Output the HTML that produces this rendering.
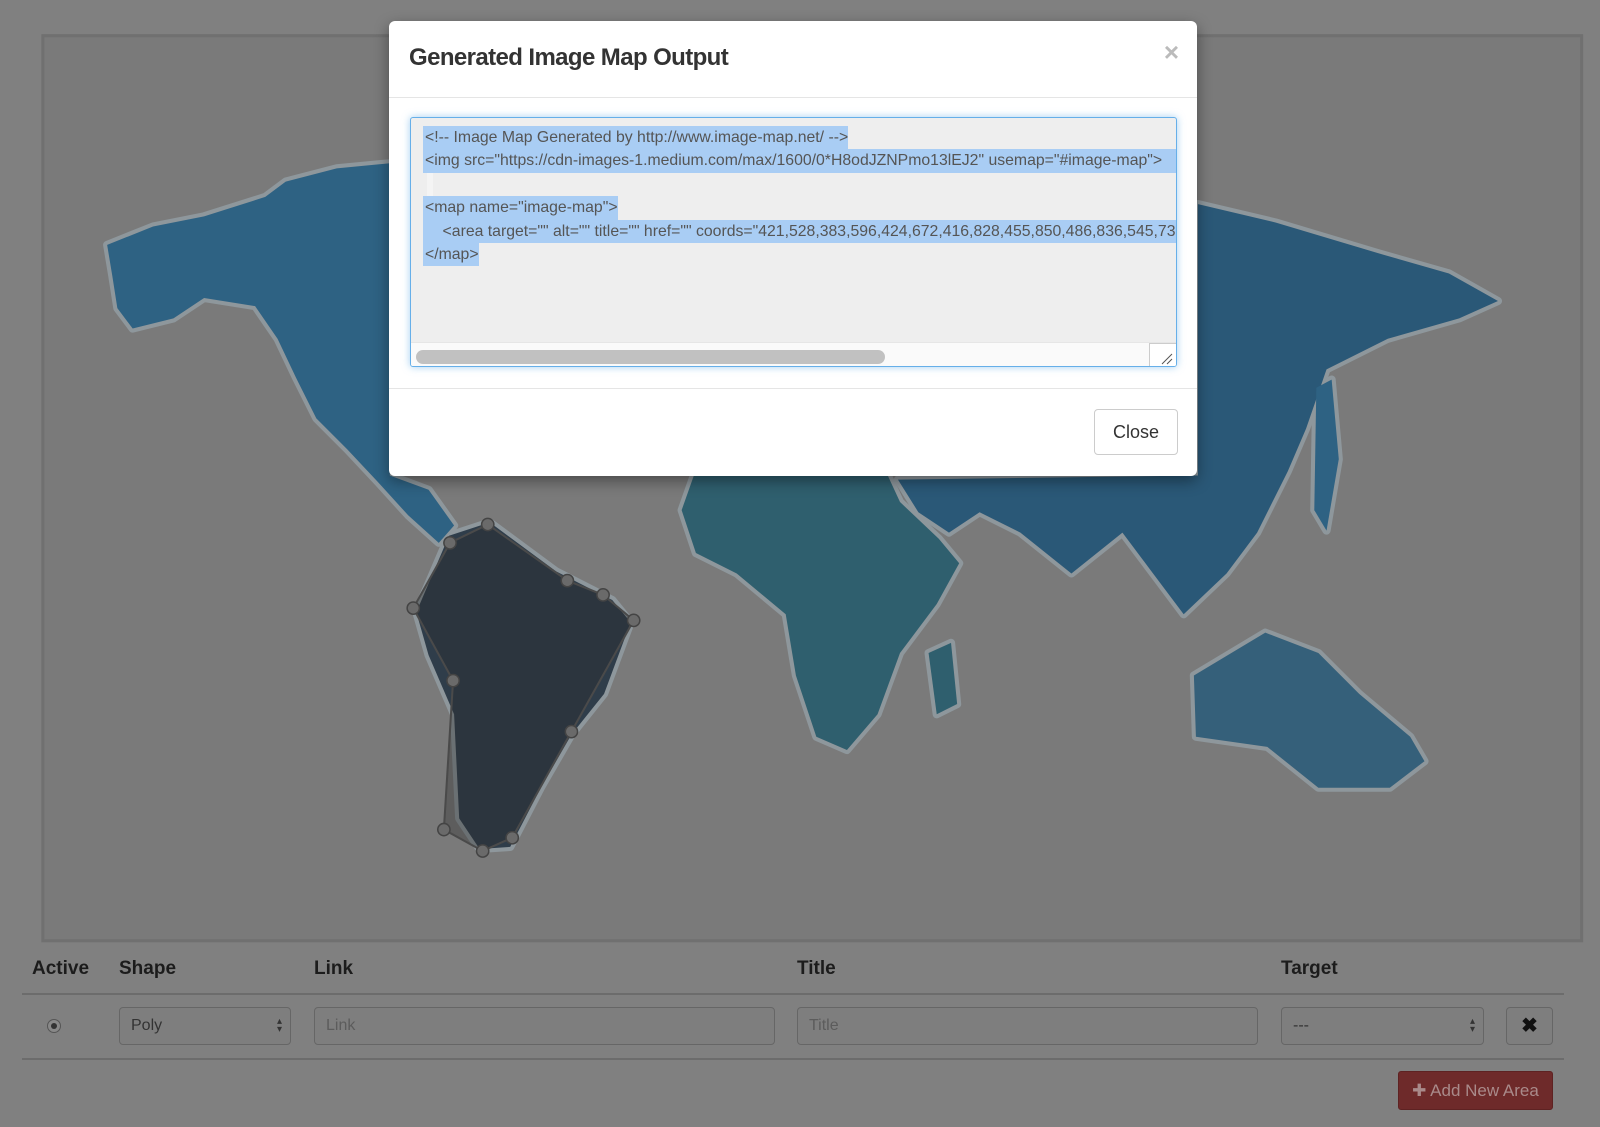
<!DOCTYPE html>
<html><head><meta charset="utf-8"><style>
*{box-sizing:border-box;margin:0;padding:0}
body{width:1600px;height:1127px;overflow:hidden;background:#808080;font-family:"Liberation Sans",Arial,sans-serif;position:relative}
svg.map{position:absolute;left:0;top:0}
.abs{position:absolute}
.modal{left:389px;top:21px;width:808px;height:455px;background:#fff;border-radius:6px;box-shadow:0 5px 15px rgba(0,0,0,.4)}
.title{left:20px;top:23px;font-size:24px;font-weight:bold;color:#333;letter-spacing:-0.6px}
.x{right:18px;top:16px;font-size:26px;color:#bbb;font-weight:bold}
.hr{left:0;width:808px;height:1px;background:#e5e5e5}
.ta{left:21px;top:96px;width:767px;height:250px;border:1px solid #66afe9;box-shadow:0 0 8px rgba(102,175,233,.6);background:#eee;overflow:hidden;border-radius:3px}
.ln{position:absolute;left:12px;height:23.4px;line-height:23.4px;font-size:15.8px;color:#555;background:#a9cdf4;white-space:nowrap;padding-left:2px}
.sb{left:0;top:224px;width:765px;height:25px;background:#fafafa;border-top:1px solid #e6e6e6}
.th{left:5px;top:7px;width:469px;height:14px;border-radius:7px;background:#c1c1c1}
.rz{right:0;top:0;width:27px;height:25px;border-left:1px solid #ccc;border-top:1px solid #ccc;background:#fff}
.btn{left:705px;top:388px;width:84px;height:46px;border:1px solid #ccc;border-radius:4px;font-size:18px;color:#333;text-align:center;line-height:44px}
.h{top:958px;font-size:19px;font-weight:bold;color:#1c1c1c}
.in{top:1007px;height:38px;border:1px solid #666;border-radius:4px;background:#7e7e7e;font-size:16px;color:#333;padding-left:11px;line-height:36px}
.ph{color:#5c5c5c}
.div{left:22px;width:1542px;height:2px;background:#6c6c6c}
</style></head><body>
<svg class="map" width="1600" height="1127" viewBox="0 0 1568 1104.5" preserveAspectRatio="none">
<rect x="42" y="35" width="1508" height="887" fill="#7a7a7a" stroke="#707070" stroke-width="3"/>
<g fill="#8e979c" stroke="#8e979c" stroke-width="8" stroke-linejoin="round">
<path d="M105 240L150 222L200 212L260 193L280 178L330 165L382 160L382 466L420 480L445 515L430 532L400 505L370 472L340 440L310 410L290 370L272 332L250 300L200 292L170 312L130 322L115 302L110 270Z"/>
<path d="M440 525L480 512L545 560L600 588L618 610L592 680L560 720L530 772L500 830L470 832L450 802L445 700L420 642L408 600Z"/>
<path d="M680 466L870 466L882 492L920 528L940 552L918 592L882 640L860 700L830 735L800 722L780 662L770 602L722 562L682 542L668 500Z"/>
<path d="M910 640L932 630L938 690L918 700Z"/>
<path d="M1174 200L1250 218L1350 248L1420 268L1468 295L1430 312L1360 332L1300 362L1280 420L1262 462L1232 522L1202 562L1160 602L1130 562L1100 522L1050 562L1000 522L960 502L930 522L900 502L880 470L1174 466Z"/>
<path d="M1290 380L1305 372L1312 450L1300 520L1288 500Z"/>
<path d="M1170 662L1240 620L1292 640L1332 680L1382 722L1396 746L1362 772L1292 772L1242 732L1172 722Z"/>
</g>
<g fill="#2e6283">
<path d="M105 240L150 222L200 212L260 193L280 178L330 165L382 160L382 466L420 480L445 515L430 532L400 505L370 472L340 440L310 410L290 370L272 332L250 300L200 292L170 312L130 322L115 302L110 270Z"/>
<path fill="#2f3d4a" d="M440 525L480 512L545 560L600 588L618 610L592 680L560 720L530 772L500 830L470 832L450 802L445 700L420 642L408 600Z"/>
<path fill="#2f5f6e" d="M680 466L870 466L882 492L920 528L940 552L918 592L882 640L860 700L830 735L800 722L780 662L770 602L722 562L682 542L668 500Z"/>
<path fill="#2f5f6e" d="M910 640L932 630L938 690L918 700Z"/>
<path fill="#2a5877" d="M1174 200L1250 218L1350 248L1420 268L1468 295L1430 312L1360 332L1300 362L1280 420L1262 462L1232 522L1202 562L1160 602L1130 562L1100 522L1050 562L1000 522L960 502L930 522L900 502L880 470L1174 466Z"/>
<path d="M1290 380L1305 372L1312 450L1300 520L1288 500Z"/>
<path fill="#35607a" d="M1170 662L1240 620L1292 640L1332 680L1382 722L1396 746L1362 772L1292 772L1242 732L1172 722Z"/>
</g>
<path d="M478 514L441 532L405 596L444 667L435 813L473 834L502 821L560 717L621 608L591 583L556 569Z" fill="rgba(40,40,40,.35)" stroke="#4a4a4a" stroke-width="2"/>
<g fill="#6a6a6a" stroke="#444" stroke-width="1.5">
<circle cx="478" cy="514" r="6"/><circle cx="441" cy="532" r="6"/><circle cx="405" cy="596" r="6"/><circle cx="444" cy="667" r="6"/><circle cx="435" cy="813" r="6"/><circle cx="473" cy="834" r="6"/><circle cx="502" cy="821" r="6"/><circle cx="560" cy="717" r="6"/><circle cx="621" cy="608" r="6"/><circle cx="591" cy="583" r="6"/><circle cx="556" cy="569" r="6"/>
</g>
</svg>

<div class="abs h" style="left:32px">Active</div>
<div class="abs h" style="left:119px">Shape</div>
<div class="abs h" style="left:314px">Link</div>
<div class="abs h" style="left:797px">Title</div>
<div class="abs h" style="left:1281px">Target</div>
<div class="abs div" style="top:993px"></div>
<div class="abs" style="left:47px;top:1019px;width:14px;height:14px;border-radius:50%;border:1px solid #555;background:#888"><div style="margin:3px;width:6px;height:6px;border-radius:50%;background:#333"></div></div>
<div class="abs in" style="left:119px;width:172px">Poly<span style="position:absolute;right:8px;top:9px;font-size:10px;line-height:10px">▴</span><span style="position:absolute;right:8px;top:17px;font-size:10px;line-height:10px">▾</span></div>
<div class="abs in ph" style="left:314px;width:461px">Link</div>
<div class="abs in ph" style="left:797px;width:461px">Title</div>
<div class="abs in" style="left:1281px;width:203px">---<span style="position:absolute;right:8px;top:9px;font-size:10px;line-height:10px">▴</span><span style="position:absolute;right:8px;top:17px;font-size:10px;line-height:10px">▾</span></div>
<div class="abs in" style="left:1506px;width:47px;padding:0;text-align:center;font-weight:bold;font-size:20px;color:#111">✖</div>
<div class="abs div" style="top:1058px"></div>
<div class="abs" style="left:1398px;top:1071px;width:155px;height:39px;background:#6e2a2a;border:1px solid #5e2222;border-radius:3px;color:#a98a8a;font-size:17px;line-height:37px;text-align:center">✚ Add New Area</div>

<div class="abs modal">
<div class="abs title">Generated Image Map Output</div>
<div class="abs x">×</div>
<div class="abs hr" style="top:76px"></div>
<div class="abs ta">
<div class="ln" style="top:8px">&lt;!-- Image Map Generated by http://www.image-map.net/ --&gt;</div>
<div class="ln" style="top:31.4px;right:0">&lt;img src="https://cdn-images-1.medium.com/max/1600/0*H8odJZNPmo13lEJ2" usemap="#image-map"&gt;</div>
<div class="ln" style="top:54.8px;left:16px;width:6px;background:#f4f4f4"></div>
<div class="ln" style="top:78.2px">&lt;map name="image-map"&gt;</div>
<div class="ln" style="top:101.6px;right:0">&nbsp;&nbsp;&nbsp;&nbsp;&lt;area target="" alt="" title="" href="" coords="421,528,383,596,424,672,416,828,455,850,486,836,545,730" shape="poly"&gt;</div>
<div class="ln" style="top:125px">&lt;/map&gt;</div>
<div class="abs sb"><div class="abs th"></div><div class="abs rz"><svg width="26" height="24"><path d="M12 20L22 10M17 20L22 15" stroke="#555" stroke-width="1"/></svg></div></div>
</div>
<div class="abs hr" style="top:367px"></div>
<div class="abs btn">Close</div>
</div>
</body></html>
